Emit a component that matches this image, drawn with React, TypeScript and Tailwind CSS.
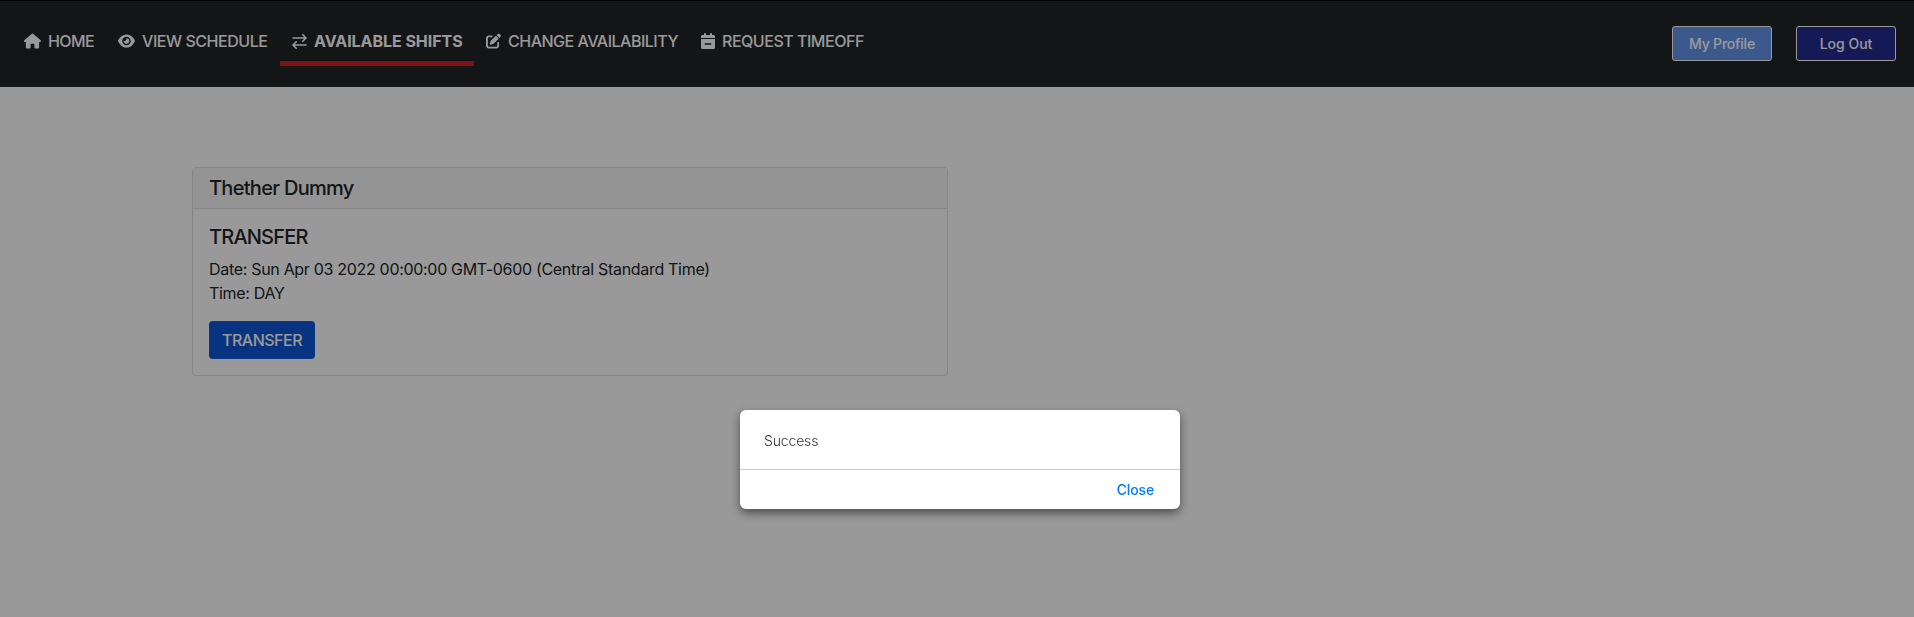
import React from "react";
import { FaHouse, FaEye, FaPenToSquare, FaCalendarMinus } from "react-icons/fa6";

const SwapIcon = ({ className }: { className?: string }) => (
  <svg
    viewBox="0 0 15 16"
    fill="none"
    stroke="currentColor"
    strokeWidth="1.6"
    strokeLinecap="round"
    strokeLinejoin="round"
    className={className}
  >
    <path d="M1 5H14M10.8 1.8L14 5L10.8 8.2" />
    <path d="M14 12H1M4.2 8.8L1 12L4.2 15.2" />
  </svg>
);

export default function App() {
  return (
    <div className="h-[617px] overflow-hidden bg-white font-['Inter','Liberation_Sans',sans-serif] text-base text-[#212529]">
      <header className="flex h-[87px] items-start justify-between border-t border-black bg-[#212427] pr-[18px] pl-3 text-white">
        <nav className="flex pt-6 font-[450]">
          <a className="flex h-[41px] items-start gap-[7px] px-3 pt-1">
            <FaHouse className="mt-1 h-4 w-[17px]" />
            <span className="w-[46px] whitespace-nowrap tracking-[-0.6px]">HOME</span>
          </a>
          <a className="flex h-[41px] items-start gap-[7px] px-3 pt-1">
            <FaEye className="mt-1 h-4 w-[17px]" />
            <span className="w-[126px] whitespace-nowrap tracking-[-0.45px]">VIEW SCHEDULE</span>
          </a>
          <a className="flex h-[41px] items-start gap-[7px] border-b-5 border-[#d51d25] px-3 pt-1 font-bold">
            <SwapIcon className="mt-1 h-4 w-[15px]" />
            <span className="w-[148px] whitespace-nowrap tracking-[-0.05px]">AVAILABLE SHIFTS</span>
          </a>
          <a className="flex h-[41px] items-start gap-[7px] px-3 pt-1">
            <FaPenToSquare className="mt-1 h-4 w-[15px]" />
            <span className="w-[169px] whitespace-nowrap tracking-[-0.5px]">CHANGE AVAILABILITY</span>
          </a>
          <a className="flex h-[41px] items-start gap-[7px] px-3 pt-1">
            <FaCalendarMinus className="mt-1 h-4 w-[14px]" />
            <span className="whitespace-nowrap tracking-[-0.48px]">REQUEST TIMEOFF</span>
          </a>
        </nav>
        <div className="flex gap-6 pt-[25px] text-sm">
          <button className="h-[35px] w-[100px] rounded-[3px] border border-white bg-[#6495ed] font-[450] tracking-[-0.2px]">My Profile</button>
          <button className="h-[35px] w-[100px] rounded-[3px] border border-white bg-[#232b8e] font-[450]">Log Out</button>
        </div>
      </header>

      <main className="pt-20 pl-48">
        <section className="h-[209px] w-[756px] rounded border border-[#dfdfdf]">
          <h5 className="border-b border-[#dfdfdf] bg-[#f7f7f7] px-4 py-2 text-xl leading-6 font-medium tracking-[-0.7px]">
            Thether Dummy
          </h5>
          <div className="p-4">
            <h5 className="mb-2 text-xl leading-6 font-medium tracking-[-0.8px]">TRANSFER</h5>
            <p className="mb-4 leading-6 tracking-[-0.31px]">
              Date: Sun Apr 03 2022 00:00:00 GMT-0600 (Central Standard Time)
              <br />
              Time: DAY
            </p>
            <button className="h-[38px] w-[106px] rounded bg-[#0d55d5] font-[450] tracking-[-0.5px] text-white">TRANSFER</button>
          </div>
        </section>
      </main>

      <div className="fixed inset-0 flex items-start justify-center bg-black/40 pt-[410px] pl-[6px]">
        <div role="dialog" className="h-[99px] w-[440px] rounded-md bg-white text-sm shadow-[0_4px_10px_rgba(0,0,0,0.5)]">
          <div className="flex h-[59px] items-center px-6 pt-[3px] font-light tracking-[-0.15px] text-[#333]">Success</div>
          <div className="flex h-10 items-center justify-end border-t border-[#ccc] pr-[26px] font-[450] tracking-[-0.15px] text-[#007aff]">
            <button>Close</button>
          </div>
        </div>
      </div>
    </div>
  );
}
